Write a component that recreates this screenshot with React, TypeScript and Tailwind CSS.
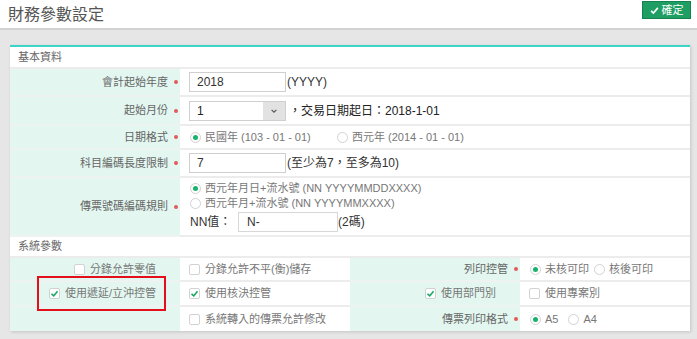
import React from 'react';

const font = { fontFamily: '"Liberation Sans", "Noto Sans CJK TC", sans-serif' };

const Dot = () => <span className="inline-block w-[4px] h-[4px] rounded-full bg-[#e25a5a] ml-[6px]" />;

const Radio = ({ checked, label }: { checked?: boolean; label: string }) => (
    <span className="inline-flex items-center gap-[4px] text-[#777]">
        <span className="w-[11px] h-[11px] rounded-full border border-[#d2d2d2] bg-white flex items-center justify-center">
            {checked && <span className="w-[5px] h-[5px] rounded-full bg-[#16b36c]" />}
        </span>
        {label}
    </span>
);

const Check = ({ checked, label }: { checked?: boolean; label: string }) => (
    <span className="inline-flex items-center gap-[5px] text-[#777]">
        <span className="w-[11px] h-[11px] rounded-[2px] border border-[#d2d2d2] bg-white flex items-center justify-center">
            {checked && (
                <svg viewBox="0 0 12 12" className="w-[9px] h-[9px]">
                    <path d="M2 6.5 L5 9.2 L10 3" fill="none" stroke="#17a863" strokeWidth="2.2" />
                </svg>
            )}
        </span>
        {label}
    </span>
);

const Label = ({ children, star = true, h }: { children: React.ReactNode; star?: boolean; h: string }) => (
    <div className={`${h} bg-[#e3f7f0] flex items-center justify-end pr-[2px] text-[#666] border-b-2 border-[#eef2f0]`}>
        {children}
        {star && <Dot />}
    </div>
);

const Section = ({ title, h }: { title: string; h: string }) => (
    <div className={`${h} px-[8px] flex items-center text-[#666] border-b-2 border-[#ececec]`}>{title}</div>
);

export default function App() {
    return (
        <div style={font} className="w-[697px] h-[339px] bg-[#e6e6e6] text-[11px] overflow-hidden">
            <div className="h-[30px] bg-white border-b-2 border-[#d2d2d2] flex items-start justify-between pl-[8px] pr-[6px]">
                <h1 className="text-[16px] text-[#555] mt-[3px]">財務參數設定</h1>
                <button className="mt-[1px] w-[49px] h-[18px] bg-[#1f9e63] border border-[#13824e] text-white text-[11px] flex items-center justify-center gap-[3px]">
                    <svg viewBox="0 0 12 12" className="w-[9px] h-[9px]">
                        <path d="M1.5 6.5 L4.5 9.5 L10.5 2.5" fill="none" stroke="#fff" strokeWidth="2.2" />
                    </svg>
                    確定
                </button>
            </div>

            <div className="ml-[10px] mt-[15px] w-[680px] bg-white border-t-2 border-[#3bd4c6] shadow-[1px_1px_3px_rgba(0,0,0,0.15)]">
                <Section title="基本資料" h="h-[22px]" />

                <div className="grid grid-cols-[170px_510px]">
                    <Label h="h-[28px]">會計起始年度</Label>
                    <div className="flex items-center pl-[9px] text-[#333] border-b-2 border-[#ececec]">
                        <div className="w-[97px] h-[20px] border border-[#cfcfcf] flex items-center px-[7px] text-[12px]">2018</div>
                        <span className="ml-[1px] text-[12px]">(YYYY)</span>
                    </div>

                    <Label h="h-[29px]">起始月份</Label>
                    <div className="flex items-center pl-[9px] text-[#222] border-b-2 border-[#ececec]">
                        <div className="w-[97px] h-[20px] border border-[#cfcfcf] flex items-center text-[12px]">
                            <span className="flex-1 px-[7px]">1</span>
                            <span className="w-[22px] h-full bg-[#e2e2e2] flex items-center justify-center">
                                <svg viewBox="0 0 10 10" className="w-[8px] h-[8px]">
                                    <path d="M2 3.5 L5 6.5 L8 3.5" fill="none" stroke="#555" strokeWidth="1.5" />
                                </svg>
                            </span>
                        </div>
                        <span className="ml-[3px] text-[12px]">，交易日期起日：2018-1-01</span>
                    </div>

                    <Label h="h-[24px]">日期格式</Label>
                    <div className="flex items-center pl-[10px] border-b-2 border-[#ececec]">
                        <span className="w-[147px]"><Radio checked label="民國年 (103 - 01 - 01)" /></span>
                        <Radio label="西元年 (2014 - 01 - 01)" />
                    </div>

                    <Label h="h-[28px]">科目編碼長度限制</Label>
                    <div className="flex items-center pl-[9px] text-[#333] border-b-2 border-[#ececec]">
                        <div className="w-[97px] h-[20px] border border-[#cfcfcf] flex items-center px-[7px] text-[12px]">7</div>
                        <span className="ml-[1px] text-[12px]">(至少為7，至多為10)</span>
                    </div>

                    <Label h="h-[59px]">傳票號碼編碼規則</Label>
                    <div className="flex flex-col justify-center pl-[10px] border-b-2 border-[#ececec]">
                        <div className="h-[15px] flex items-center"><Radio checked label="西元年月日+流水號 (NN YYYYMMDDXXXX)" /></div>
                        <div className="h-[15px] flex items-center"><Radio label="西元年月+流水號 (NN YYYYMMXXXX)" /></div>
                        <div className="flex items-center mt-[1px] text-[#333] text-[12px]">
                            <span className="w-[48px]">NN值：</span>
                            <div className="w-[100px] h-[20px] border border-[#d8d8d8] flex items-center px-[8px]">N-</div>
                            <span>(2碼)</span>
                        </div>
                    </div>
                </div>

                <Section title="系統參數" h="h-[21px]" />

                <div className="grid grid-cols-[170px_170px_170px_170px]">
                    <div className="h-[24px] bg-[#e3f7f0] flex items-center justify-end pr-[24px] border-b-2 border-[#eef2f0]">
                        <Check label="分錄允許零值" />
                    </div>
                    <div className="flex items-center pl-[9px] border-b-2 border-[#ececec]">
                        <Check label="分錄允許不平(衡)儲存" />
                    </div>
                    <Label h="h-[24px]">列印控管</Label>
                    <div className="flex items-center gap-[5px] pl-[10px] border-b-2 border-[#ececec]">
                        <Radio checked label="未核可印" />
                        <Radio label="核後可印" />
                    </div>

                    <div className="h-[25px] bg-[#e3f7f0] flex items-center justify-end pr-[24px] border-b-2 border-[#eef2f0]">
                        <span className="relative">
                            <Check checked label="使用遞延/立沖控管" />
                            <span className="absolute left-[-12px] right-[-10px] top-[-9px] bottom-[-9px] border-2 border-[#e3101b]" />
                        </span>
                    </div>
                    <div className="flex items-center pl-[9px] border-b-2 border-[#ececec]">
                        <Check checked label="使用核決控管" />
                    </div>
                    <div className="bg-[#e3f7f0] flex items-center justify-end pr-[24px] border-b-2 border-[#eef2f0]">
                        <Check checked label="使用部門別" />
                    </div>
                    <div className="flex items-center pl-[9px] border-b-2 border-[#ececec]">
                        <Check label="使用專案別" />
                    </div>

                    <div className="h-[24px] bg-[#e3f7f0]" />
                    <div className="flex items-center pl-[9px]">
                        <Check label="系統轉入的傳票允許修改" />
                    </div>
                    <div className="h-[24px] bg-[#e3f7f0] flex items-center justify-end pr-[2px] text-[#666]">
                        傳票列印格式
                        <Dot />
                    </div>
                    <div className="flex items-center gap-[10px] pl-[10px]">
                        <Radio checked label="A5" />
                        <Radio label="A4" />
                    </div>
                </div>
            </div>
        </div>
    );
}
